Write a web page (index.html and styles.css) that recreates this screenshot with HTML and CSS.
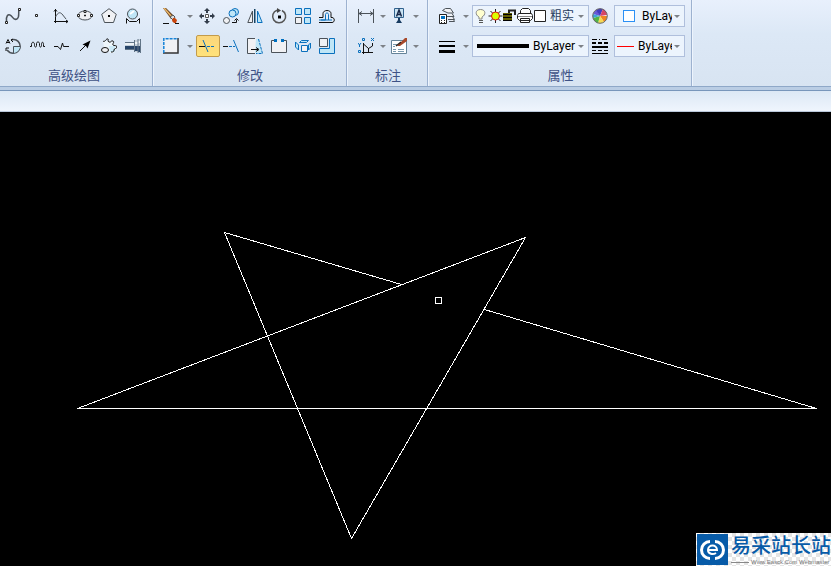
FILE: index.html
```html
<!DOCTYPE html>
<html lang="zh-CN">
<head>
    <meta charset="UTF-8">
    <meta name="viewport" content="width=device-width, initial-scale=1.0">
    <title>CAD</title>
    <link rel="stylesheet" href="styles.css">
</head>
<body>
    <div class="ribbon">
        <!-- advanced drawing -->
        <div class="group draw">
            <div class="row">
                <button type="button" class="tool" aria-label="样条"><svg viewBox="0 0 16 16"><path class="grey" stroke-width="1.5" d="M1.5 13C1 8 3 6 5 7c3 1 3 6 7 4 3-2 1-6 2-9"/><path class="box" d="M13.5.5h2v2h-2zM.5 13.5h2v2h-2z"/></svg></button>
                <button type="button" class="tool" aria-label="点"><svg viewBox="0 0 16 16"><path class="box" d="M6.5 6.5h2v2h-2z"/></svg></button>
                <button type="button" class="tool" aria-label="公式曲线"><svg viewBox="0 0 16 16"><path class="line" d="M2.5 1v14M1 13.5h14M1 3.5l1.500-2 1.500 2M13 12l2 1.500-2 1.500"/><path class="grey" d="M2.500 9C5 4 7 4 9 6l4 5"/></svg></button>
                <button type="button" class="tool" aria-label="椭圆"><svg viewBox="0 0 16 16"><ellipse class="grey soft" cx="8" cy="7.500" rx="7" ry="4.500"/><path class="box" d="M7 2.500h2v2H7zM7.500 7h1v1h-1zM.5 6.500h2v2h-2zM13.500 6.500h2v2h-2z"/></svg></button>
                <button type="button" class="tool" aria-label="正多边形"><svg viewBox="0 0 16 16"><path class="grey soft" d="M8 .7l7.300 5.600-2.800 8.200h-9L.7 6.300z"/><path d="M7 7h2v2H7z"/></svg></button>
                <button type="button" class="tool" aria-label="局部放大"><svg viewBox="0 0 16 16"><circle class="grey sky" cx="7.500" cy="6" r="5"/><path d="M5 6l4-3" stroke="#fff" stroke-width="2"/><path class="line" d="M1.500 15.500v-5l3 3h7l3-3v5"/></svg></button>
            </div>
            <div class="row">
                <button type="button" class="tool" aria-label="圆弧拟合"><svg viewBox="0 0 16 16"><path class="grey" stroke-width="1.5" d="M6 2c6-2 10 3 9 8-2 6-9 7-13 2"/><path class="sky" d="M8 8h7c0 4-3 7-7 7z"/><path class="grey" d="M8.500 15V8.500H15"/><path class="line" d="M1 5.500l2-4 2 4M2 4.500h2M8 1L6 2l2 2M1 13v-3h3"/></svg></button>
                <button type="button" class="tool" aria-label="波浪线"><svg viewBox="0 0 16 16"><path class="line" d="M1 8.500h1.500v-2c0-3 3-3 3 0v1c0 2 2 2 2 0v-2c0-2 3-2 3 0v2c0 2 2 2 2 0v-1c0-3 2-3 2 0v2H16"/></svg></button>
                <button type="button" class="tool" aria-label="双折线"><svg viewBox="0 0 16 16"><path class="line" d="M1 8.500h4l1.500 2 1 1L9.500 5l1 3.500H16"/></svg></button>
                <button type="button" class="tool" aria-label="箭头"><svg viewBox="0 0 16 16"><path class="line" d="M3 13l7-7"/><path d="M13.500 2.500l-3 8L9 8 5.500 6.500z"/></svg></button>
                <button type="button" class="tool" aria-label="齿轮"><svg viewBox="0 0 16 16"><path d="M2 3h9l5 7-3 5H9L3 9z" fill="#eef6fb"/><path d="M8 8h6v6H9z" fill="#cdeaf7"/><path class="line" d="M2 3c2 2 3-3 5-2 1 1-1 2 1 3s2-2 4-1-1 3 0 4 4 0 4 2-3 1-3 3-1 2-3 2"/><ellipse class="line soft" cx="4" cy="12" rx="3.500" ry="2.500"/></svg></button>
                <button type="button" class="tool" aria-label="孔/轴"><svg viewBox="0 0 16 16"><path fill="#c3cfda" d="M0 4h9v8H0zM9 2h4v12H9zM13 1h3v14h-3z"/><path d="M0 8h9v3H0zM9 8h4v5H9zM13 8h3v6h-3z" fill="#284569"/><path d="M0 6h9M9 5h4M13 4h3" stroke="#eef3f7" stroke-width="2"/><path d="M9.500 2v12M13 1v14M15.500 1v14M0 4.500h9M0 11.500h9" stroke="#627587"/></svg></button>
            </div>
            <div class="label">高级绘图</div>
        </div>

        <!-- modify -->
        <div class="group modify">
            <div class="row">
                <button type="button" class="tool" aria-label="删除"><svg viewBox="0 0 16 16"><path d="M0 0h3l8 8-3 3z" fill="#6b4423"/><path d="M1 0l8 9" stroke="#e8b668" stroke-width="1.5"/><path d="M7 9l3-2 2 2-2 3z" fill="#ddd" stroke="#555"/><path d="M10 10h2l2 2-1 3h-2l-2-2z" fill="#c8440c"/><path class="line" d="M0 15.500h6M12 15.500h4"/></svg></button>
                <button type="button" class="caret" aria-label="删除选项"></button>
                <button type="button" class="tool" aria-label="平移"><svg viewBox="0 0 16 16"><path d="M8 0l3 3H9v2H7V3H5zM8 16l3-3H9v-2H7v2H5zM0 8l3-3v2h2v2H3v2zM16 8l-3-3v2h-2v2h2v2z" fill="#333d4b"/><path d="M6.500 6.500h3v3h-3z" fill="#fff" stroke="#555"/></svg></button>
                <button type="button" class="tool" aria-label="平移复制"><svg viewBox="0 0 16 16"><circle class="blue sky" cx="12" cy="4" r="3.500"/><circle class="blue sky" cx="9.500" cy="5.500" r="3.500"/><circle class="grey soft" cx="3.500" cy="12.500" r="3"/><path class="line" d="M9 14.500h4.500v-3M11.500 12.500l2-2 2 2"/></svg></button>
                <button type="button" class="tool" aria-label="镜像"><svg viewBox="0 0 16 16"><path class="grey soft" d="M5.500 3v11.500H.8z"/><path class="blue sky" d="M10.500 3v11.500h4.700z"/><path d="M7 1h1.500v14H7z" fill="#164363"/></svg></button>
                <button type="button" class="tool" aria-label="旋转"><svg viewBox="0 0 16 16"><path d="M11 2.500A6.500 6.500 0 1 1 6 2.200" fill="none" stroke="#555" stroke-width="1.500"/><path d="M6 0l4 2.500L6 5z" fill="#444"/><path d="M7 7.500h3v3H7z"/></svg></button>
                <button type="button" class="tool" aria-label="阵列"><svg viewBox="0 0 16 16"><path class="blue sky" d="M.5.500h6v6h-6zM9.500.5h6v6h-6zM9.500 9.500h6v6h-6z"/><path class="grey soft" d="M.5 9.500h6v6h-6z"/></svg></button>
                <button type="button" class="tool" aria-label="等距线"><svg viewBox="0 0 16 16"><path class="line" d="M0 14.500h13c3 0 3-5 0-5h-1V5.500c0-4-8-4-8 0v4H0"/><path class="blue" d="M0 12h13M2 12h4.500V6.500c0-2 3-2 3 0V12"/></svg></button>
            </div>
            <div class="row">
                <button type="button" class="tool" aria-label="拉伸"><svg viewBox="0 0 16 16"><path class="soft" d="M1 1h14v14H1z"/><path d="M15 0v15H0" fill="none" stroke="#333" stroke-width="1.5"/><path d="M.8 15V.8H15" fill="none" stroke="#1683d8" stroke-width="1.5" stroke-dasharray="3 1"/></svg></button>
                <button type="button" class="caret" aria-label="拉伸选项"></button>
                <button type="button" class="tool active" aria-label="裁剪"><svg viewBox="0 0 16 16"><path class="line" d="M0 8.500h6"/><path class="blue" d="M8 8.500h8" stroke-dasharray="3 1"/><path d="M4 2l5 12" class="blue"/></svg></button>
                <button type="button" class="tool" aria-label="延伸"><svg viewBox="0 0 16 16"><path class="line" d="M0 8.500h5"/><path class="blue" d="M6 8.500h6" stroke-dasharray="3 1"/><path d="M10.500 2l5 12" class="blue"/></svg></button>
                <button type="button" class="tool" aria-label="过渡"><svg viewBox="0 0 16 16"><path class="soft" d="M.5.500h9v15h-9z"/><path class="sky" d="M9 1h3l3 14H8z"/><path class="grey" d="M8 .5H.5v15H8"/><path class="blue" d="M11.500 1l4 14.500H9" stroke-dasharray="3 1"/><path class="line" d="M4 11.500h7M9 9.500l3 2-3 2"/></svg></button>
                <button type="button" class="tool" aria-label="打断"><svg viewBox="0 0 16 16"><path class="grey soft" d="M3 2.500H.5v12h15v-12H13"/><path d="M3 1h3v3H3zM10 1h3v3h-3z" fill="#0070c0"/></svg></button>
                <button type="button" class="tool" aria-label="分解"><svg viewBox="0 0 16 16"><path class="blue sky" d="M4.500 4.500l2-2h7l-2 2zM13.500 7l2-2v5l-2 2zM.5 4v5l3 3V7z"/><path class="blue soft" d="M6.500 7.500h6v6h-6z"/></svg></button>
                <button type="button" class="tool" aria-label="缩放"><svg viewBox="0 0 16 16"><path class="blue sky" d="M10.500.5h5v15H.5v-5h10z"/><path class="grey soft" d="M.5.500h8v8h-8z"/></svg></button>
            </div>
            <div class="label">修改</div>
        </div>

        <!-- dimension -->
        <div class="group dimension">
            <div class="row">
                <button type="button" class="tool" aria-label="尺寸标注"><svg viewBox="0 0 16 16"><path class="grey" d="M.5 1v14M15.500 1v14M1 5.500h14M4 3.500l-3 2 3 2M12 3.500l3 2-3 2"/></svg></button>
                <button type="button" class="caret" aria-label="尺寸选项"></button>
                <button type="button" class="tool" aria-label="文字"><svg viewBox="0 0 16 16"><path d="M3.500.5h9v9h-9z" fill="#c9e3f3" stroke="#31628e"/><path d="M5.500 8.500L8 2l2.500 6.500M6 6.500h4" fill="none" stroke="#162647" stroke-width="1.500"/><path d="M7 10h2v2l2 3H5l2-3z" fill="#173b61"/></svg></button>
                <button type="button" class="caret" aria-label="文字选项"></button>
            </div>
            <div class="row">
                <button type="button" class="tool" aria-label="坐标标注"><svg viewBox="0 0 16 16"><path class="line" d="M5.500 5v11M4 14.500h11M5.500 6l5 4.500 4-2.500V5M10.500 10v4"/><path class="blue" d="M4.500.5h2v2h-2zM13 0l3 3M16 0l-3 3M0 5l1.500 2L3 5M1.500 7v2M.5 12.500h2v2h-2z"/></svg></button>
                <button type="button" class="caret" aria-label="坐标选项"></button>
                <button type="button" class="tool" aria-label="标注编辑"><svg viewBox="0 0 16 16"><path d="M.5 2.500h15v13H.5z" fill="#fff" stroke="#668499"/><path d="M2 6.500h4M2 8.500h2M2 11.500h3M7 11.500h6M2 13.500h3M7 13.500h6" stroke="#7899af"/><path d="M6 8l6-6 2-2h2v3L9 8z" fill="#a7492b"/><path d="M5 8l5-4" stroke="#30241c" stroke-width="1.5"/></svg></button>
                <button type="button" class="caret" aria-label="编辑选项"></button>
            </div>
            <div class="label">标注</div>
        </div>

        <!-- properties -->
        <div class="group props">
            <div class="row">
                <button type="button" class="tool" aria-label="图层"><svg viewBox="0 0 16 16"><path class="grey soft" d="M3.500 2.500l3-2h5l3 4.500H9zM7 8.500h8l-2-3M9 11.500h6.500l-2-3M10 13.500h5.500l-1-2"/><path d="M.5 6.500h7v9h-7z" fill="#fff" stroke="#222"/><path d="M2 8h4v3H2z" fill="#0070c0"/><path d="M2 12.500h1m2 0h1m-4 2h1m2 0h1" stroke="#222"/></svg></button>
                <button type="button" class="caret" aria-label="图层选项"></button>
                <div class="combo wide">
                    <svg class="layer-state" viewBox="0 0 71 16">
                        <!-- bulb, sun, lock, printer, colour -->
                        <path d="M4 11V9C0 7 0 1.500 5.500 1.500S11 7 7 9v2z" fill="#ffffd0" stroke="#888"/><path d="M4 12.500h4M4 14.500h4" stroke="#555"/>
                        <path d="M20.500 1v14M13.500 8h14M15.500 3l10 10M25.500 3l-10 10" stroke="#222"/><circle cx="20.500" cy="8" r="4" fill="#df0" stroke="#e01010"/>
                        <path d="M28 5h9v8h-9z" fill="#625f00"/><path d="M28 6.500h9M28 9.500h9M28 12.500h9" stroke="#000"/><path d="M34 5V2.500h6V7" fill="none" stroke="#222" stroke-width="2"/>
                        <path class="box" d="M45.500 5.500v-3l2-2h6l2 2v3M43.500 5.500h13l1 2v3l-2 2h-11l-2-2v-3zM45.500 10.500h9v4h-9z"/><path d="M43 8.500h14" stroke="#888"/>
                        <path class="box" d="M59.500 2.500h11v11h-11z"/>
                    </svg>
                    <select class="pick layer" aria-label="当前图层"><option>粗实线层</option></select>
                    <span class="arrow"></span>
                </div>
                <button type="button" class="tool" aria-label="颜色"><svg viewBox="0 0 16 16"><circle cx="8" cy="8" r="7" fill="#fff"/><path d="M8 8L1 6a7 7 0 0 1 4-4z" fill="#6858d9"/><path d="M8 8L4 2a7 7 0 0 1 7-1z" fill="#423cc0"/><path d="M8 8l3-7a7 7 0 0 1 4 6z" fill="#d74567"/><path d="M8 8h7a7 7 0 0 1-3 6z" fill="#ef8520"/><path d="M8 8l4 6a7 7 0 0 1-6 1z" fill="#f5da54"/><path d="M8 8l-2 7a7 7 0 0 1-5-5z" fill="#54b544"/><path d="M8 8l-7 2a7 7 0 0 1 0-4z" fill="#3ba5d7"/><circle cx="8" cy="8" r="7.300" fill="none" stroke="#666"/></svg></button>
                <div class="combo narrow">
                    <span class="swatch"></span>
                    <select class="pick" aria-label="颜色"><option>ByLayer</option></select>
                    <span class="arrow"></span>
                </div>
            </div>
            <div class="row">
                <button type="button" class="tool" aria-label="线宽"><svg viewBox="0 0 16 16"><path d="M0 3h16v1H0zM0 7h16v2H0zM0 12h16v3H0z"/></svg></button>
                <button type="button" class="caret" aria-label="线宽选项"></button>
                <div class="combo wide">
                    <span class="width-line"></span>
                    <select class="pick" aria-label="线宽"><option>ByLayer</option></select>
                    <span class="arrow"></span>
                </div>
                <button type="button" class="tool" aria-label="线型"><svg viewBox="0 0 16 16" fill="none" stroke="#000"><path d="M0 1.500h16" stroke-dasharray="5 2 1 2"/><path d="M0 5h16" stroke-width="2" stroke-dasharray="4 2"/><path d="M0 9h16" stroke-width="2"/><path d="M0 12.500h16" stroke-dasharray="4 2"/><path d="M0 15.500h16"/></svg></button>
                <div class="combo narrow">
                    <span class="type-line"></span>
                    <select class="pick" aria-label="线型"><option>ByLayer</option></select>
                    <span class="arrow"></span>
                </div>
            </div>
            <div class="label">属性</div>
        </div>
    </div>
    <div class="tabbar"></div>

    <div class="canvas">
        <svg class="drawing" viewBox="0 112 831 454">
            <path d="M401.500 284.500L224.500 232.500L351.500 538.500L525.500 237.500L77.500 408.500H816.500L484.500 309.500"/>
            <rect x="435.500" y="297.500" width="6" height="6"/>
        </svg>
        <div class="brand">
            <svg class="brand-logo" viewBox="0 0 31 31"><path d="M0 0h31v31H0z" fill="#075ba8"/><path d="M13 7.500a8.500 8.500 0 0 0 0 17M18 7.500a8.500 8.500 0 0 1 0 17" fill="none" stroke="#fff" stroke-width="3"/><path d="M11 16h9c0-6-9-6-9 0 0 4 5 5 8 3" fill="none" stroke="#fff" stroke-width="2"/></svg>
            <div class="brand-text">
                <div class="brand-name">易采站长站</div>
                <div class="brand-url" lang="en">Www.Easck.Com Webmaster</div>
            </div>
        </div>
    </div>
</body>
</html>
```

FILE: styles.css
```css
* {
    box-sizing: border-box;
}

body {
    display: flex;
    flex-direction: column;
    height: 100vh;
    margin: 0;
    overflow: hidden;
    font-family: Roboto, "Noto Sans CJK SC", sans-serif;
    font-size: 12px;
    background: #000;
}

/* ribbon */
.ribbon {
    display: flex;
    flex-shrink: 0;
    background: linear-gradient(#e8f0fc, #dce8f6 40%, #d8e4f2);
    border-bottom: 1px solid #8fa8c8;
}

.group {
    padding: 5px 6px 1px;
    border-right: 1px solid #9db2d0;
    box-shadow: 1px 0 #edf4fd;
}

.draw {
    padding-left: 2px;
}

.modify {
    padding-left: 7px;
}

.dimension,
.props {
    padding-left: 8px;
}

.row {
    display: flex;
    height: 22px;
    margin-bottom: 8px;
}

.label {
    font-family: "Noto Sans CJK SC", sans-serif;
    font-size: 13px;
    line-height: 20px;
    text-align: center;
    color: #3e5285;
}

.tool {
    width: 24px;
    height: 22px;
    padding: 3px 5px 3px 3px;
    border: 0;
    background: none;
}

.tool svg {
    display: block;
    width: 16px;
    height: 16px;
}

.tool.active {
    padding: 2px 4px 2px 2px;
    border: 1px solid #c29b4b;
    border-radius: 2px;
    background: linear-gradient(#fbd67c, #ffe27a);
}

.caret {
    display: flex;
    align-items: center;
    justify-content: center;
    width: 9px;
    padding: 0 1px 0 0;
    border: 0;
    background: none;
}

.modify .caret,
.props .caret {
    width: 12px;
}

.caret::before,
.arrow {
    content: "";
    border: 3px solid transparent;
    border-top-color: #7d8187;
    border-bottom: 0;
}

/* icon strokes and fills */
.line {
    fill: none;
    stroke: #111;
}

.grey {
    fill: none;
    stroke: #4b5259;
}

.blue {
    fill: none;
    stroke: #0a70bd;
}

.box {
    fill: #fff;
    stroke: #222;
}

.soft {
    fill: #f0f1f4;
}

.sky {
    fill: #bfe6f7;
}

/* drop-downs */
.combo {
    display: flex;
    align-items: center;
    height: 22px;
    padding: 0 4px 0 2px;
    border: 1px solid #afbfdc;
    background: #ecf4fd;
}

.combo.wide {
    width: 117px;
}

.combo.narrow {
    width: 71px;
    margin-left: 1px;
}

.pick {
    flex: 1;
    min-width: 0;
    height: 20px;
    margin: 0 2px 0 4px;
    padding: 0;
    appearance: none;
    border: 0;
    background: none;
    font: inherit;
    color: #000;
}

.layer {
    margin-right: 4px;
    color: #263b5c;
}

.layer-state {
    flex-shrink: 0;
    width: 71px;
    height: 16px;
}

.swatch {
    flex-shrink: 0;
    width: 12px;
    height: 12px;
    margin: 0 3px 0 6px;
    border: 1px solid #2b90f5;
    background: #fff;
}

.width-line {
    flex-shrink: 0;
    width: 52px;
    height: 4px;
    margin-left: 2px;
    background: #000;
}

.type-line {
    flex-shrink: 0;
    width: 17px;
    height: 1px;
    background: #f00;
}

.tabbar {
    flex-shrink: 0;
    height: 25px;
    border-top: 3px solid #bacde4;
    border-bottom: 1px solid #bac8da;
    background: linear-gradient(#7896bb 1px, #dce8f5 1px, #eff5fd);
}

/* drawing area */
.canvas {
    position: relative;
    flex: 1;
    min-height: 0;
    background: #000;
}

.drawing {
    display: block;
    width: 100%;
    height: 100%;
    fill: none;
    stroke: #fff;
    shape-rendering: crispEdges;
}

.brand {
    position: absolute;
    right: 0;
    bottom: 0;
    display: flex;
    gap: 3px;
    padding: 1px 0 1px 1px;
    background: repeating-conic-gradient(#e4e4e4 0 25%, #fff 0 50%) 0 0 / 8px 8px;
}

.brand-logo {
    width: 31px;
    height: 31px;
}

.brand-name {
    font-family: "Liberation Sans", "Noto Sans CJK SC", sans-serif;
    font-size: 20px;
    font-weight: 500;
    line-height: 25px;
    height: 25px;
    color: #075ba8;
}

.brand-url {
    display: flex;
    align-items: center;
    gap: 2px;
    font-family: "Liberation Sans", sans-serif;
    font-size: 6px;
    line-height: 6px;
    white-space: nowrap;
    color: #777;
}

.brand-url::before {
    content: "";
    width: 18px;
    height: 1px;
    background: #888;
}
```
